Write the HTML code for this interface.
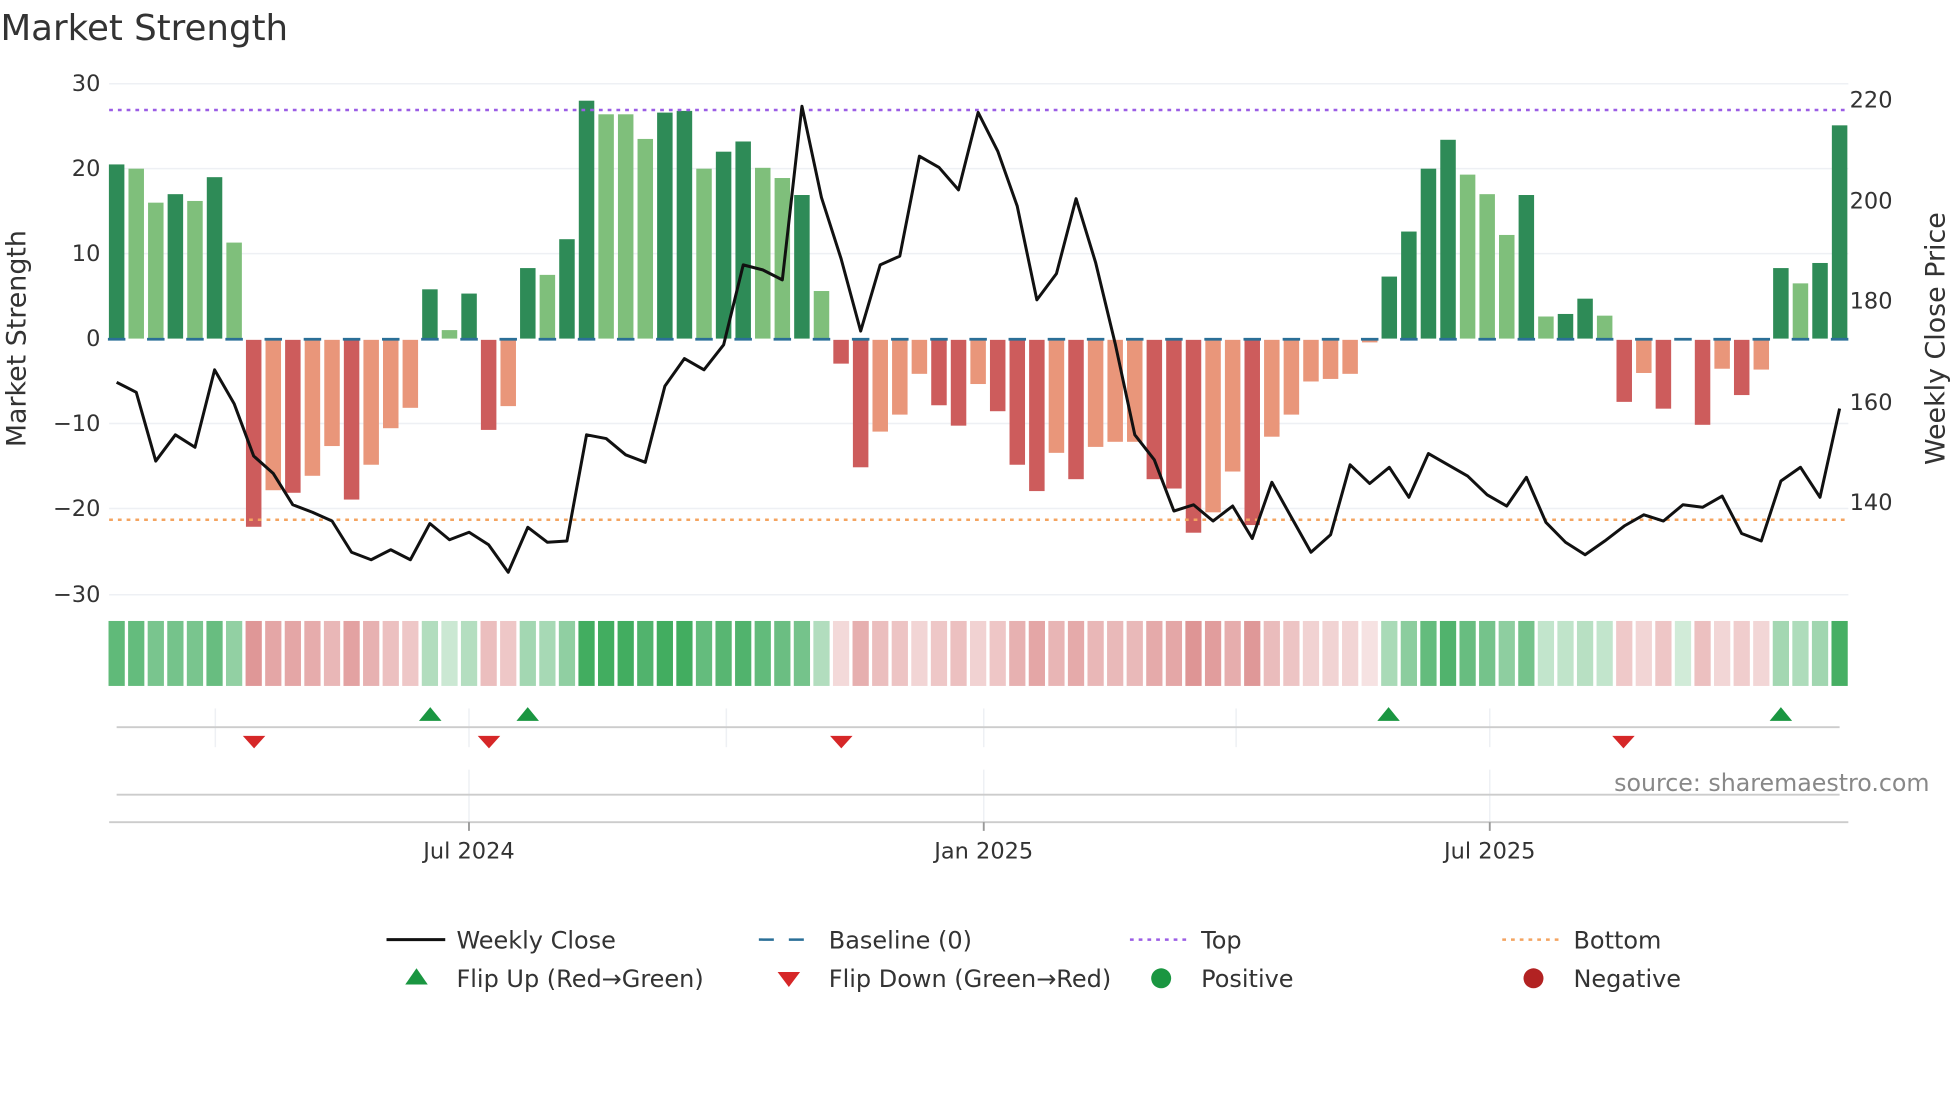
<!DOCTYPE html>
<html><head><meta charset="utf-8"><style>
html,body{margin:0;padding:0;background:#fff;}
svg{display:block;font-family:"DejaVu Sans","Liberation Sans",sans-serif;}
</style></head><body>
<svg id="s" width="1960" height="1102" viewBox="0 0 1568 882" xmlns="http://www.w3.org/2000/svg">
<rect width="1568" height="882" fill="#fff"/>
<text x="0" y="32" font-size="28.5" fill="#333">Market Strength</text>
<g id="grid" stroke="#eef0f4" stroke-width="1.2"></g>
<g id="bars"></g>
<line x1="87" y1="88" x2="1479" y2="88" stroke="#9b5de5" stroke-width="2" stroke-dasharray="3,4"/>
<line x1="87" y1="416" x2="1479" y2="416" stroke="#f4a460" stroke-width="2" stroke-dasharray="3,4"/>
<g id="base"></g>
<polyline id="price" fill="none" stroke="#111" stroke-width="2.4" stroke-linejoin="round"/>
<g id="heat"></g>
<g id="tri"></g>
<g font-size="18" fill="#333">
<text x="80" y="73" text-anchor="end">30</text>
<text x="80" y="141" text-anchor="end">20</text>
<text x="80" y="209" text-anchor="end">10</text>
<text x="80" y="277" text-anchor="end">0</text>
<text x="80" y="345" text-anchor="end">−10</text>
<text x="80" y="413" text-anchor="end">−20</text>
<text x="80" y="482" text-anchor="end">−30</text>
<text x="1480" y="86">220</text>
<text x="1480" y="167">200</text>
<text x="1480" y="247">180</text>
<text x="1480" y="328">160</text>
<text x="1480" y="408">140</text>
<text x="375" y="687" text-anchor="middle">Jul 2024</text>
<text x="787" y="687" text-anchor="middle">Jan 2025</text>
<text x="1192" y="687" text-anchor="middle">Jul 2025</text>
</g>
<text transform="translate(20,271) rotate(-90)" font-size="21.5" fill="#333" text-anchor="middle">Market Strength</text>
<text transform="translate(1556,271) rotate(-90)" font-size="21.5" fill="#333" text-anchor="middle">Weekly Close Price</text>
<text x="1544" y="633" font-size="19" fill="#888" text-anchor="end">source: sharemaestro.com</text>
<g font-size="19.2" fill="#333">
<line x1="309" y1="752" x2="356" y2="752" stroke="#111" stroke-width="2.4"/>
<text x="365" y="759">Weekly Close</text>
<line x1="607" y1="752" x2="652" y2="752" stroke="#2a6f97" stroke-width="2" stroke-dasharray="12,12"/>
<text x="663" y="759">Baseline (0)</text>
<line x1="904" y1="752" x2="949" y2="752" stroke="#9b5de5" stroke-width="2" stroke-dasharray="3,4"/>
<text x="961" y="759">Top</text>
<line x1="1202" y1="752" x2="1247" y2="752" stroke="#f4a460" stroke-width="2" stroke-dasharray="3,4"/>
<text x="1259" y="759">Bottom</text>
<polygon points="324,788 342,788 333,775" fill="#1a9641"/>
<text x="365" y="790">Flip Up (Red→Green)</text>
<polygon points="622,778 640,778 631,790" fill="#d62728"/>
<text x="663" y="790">Flip Down (Green→Red)</text>
<circle cx="929" cy="783" r="8" fill="#1a9641"/>
<text x="961" y="790">Positive</text>
<circle cx="1227" cy="783" r="8" fill="#b22222"/>
<text x="1259" y="790">Negative</text>
</g>
</svg>
<script>
var NS="http://www.w3.org/2000/svg";
function el(p,t,a){var e=document.createElementNS(NS,t);for(var k in a)e.setAttribute(k,a[k]);document.getElementById(p).appendChild(e);return e;}
var v=[20.5,20,16,17,16.2,19,11.3,-22,-17.7,-18,-16,-12.5,-18.8,-14.7,-10.4,-8,5.8,1,5.3,-10.6,-7.8,8.3,7.5,11.7,28,26.4,26.4,23.5,26.6,26.8,20,22,23.2,20.1,18.9,16.9,5.6,-2.8,-15,-10.8,-8.8,-4,-7.7,-10.1,-5.2,-8.4,-14.7,-17.8,-13.3,-16.4,-12.6,-12,-12,-16.4,-17.5,-22.7,-20.3,-15.5,-21.8,-11.4,-8.8,-4.9,-4.6,-4,-0.3,7.3,12.6,20,23.4,19.3,17,12.2,16.9,2.6,2.9,4.7,2.7,-7.3,-3.9,-8.1,0,-10,-3.4,-6.5,-3.5,8.3,6.5,8.9,25.1];
var dk="0 3 5 16 18 21 23 24 28 29 31 32 35 37 38 42 43 45 46 47 49 53 54 55 58 65 66 67 68 72 74 75 77 79 81 83 85 87 88 7 9 12 19".split(" ").map(Number);
var py=[306,314,369,348,358,296,323,365,379,404,410,417,442,448,440,448,419,432,426,436,458,422,434,433,348,351,364,370,309,287,296,276,212,216,224,85,158,207,265,212,205,125,134,152,90,121,165,240,219,159,210,275,348,368,409,404,417,405,431,386,414,442,428,372,387,374,398,363,372,381,396,405,382,418,434,444,433,421,412,417,404,406,397,427,433,385,374,398,327];
var st=1379/88;
[67,135,203,339,407,476].forEach(function(y){el("grid","line",{x1:87,x2:1479,y1:y,y2:y});});
[172,375,581,787,989,1192].forEach(function(x){el("grid","line",{x1:x,x2:x,y1:567,y2:598});});
[375,787,1192].forEach(function(x){el("grid","line",{x1:x,x2:x,y1:616,y2:658});});
el("grid","line",{x1:93,x2:1472,y1:582,y2:582,stroke:"#ccc","stroke-width":1.5});
el("grid","line",{x1:93,x2:1472,y1:636,y2:636,stroke:"#ccc","stroke-width":1.5});
el("grid","line",{x1:87,x2:1479,y1:658,y2:658,stroke:"#ccc","stroke-width":1.5});
[375,787,1192].forEach(function(x){el("grid","line",{x1:x,x2:x,y1:658,y2:665,stroke:"#999","stroke-width":1.5});});
var pts=[];
for(var i=0;i<89;i++){
 var x=93+st*i,val=v[i],d=dk.indexOf(i)>=0,h=Math.abs(val)*6.8;
 var c=val>=0?(d?"#2e8b57":"#7fbf7b"):(d?"#cd5c5c":"#e9967a");
 if(h>0.3)el("bars","rect",{x:x-6.2,width:12.4,y:val>=0?271-h:272,height:h,fill:c});
 var a=0.22+0.68*Math.min(1,Math.abs(val)/26);
 el("heat","rect",{x:x-6.5,width:13,y:497,height:52,fill:val>=0?"#2ea44f":"#cd5c5c","fill-opacity":(val>=0?a:a*0.8).toFixed(2)});
 pts.push(x.toFixed(1)+","+py[i]);
 if(i%2==0)el("base","line",{x1:x-7,x2:x+7,y1:271.5,y2:271.5,stroke:"#2a6f97","stroke-width":2.2});
}
document.getElementById("price").setAttribute("points",pts.join(" "));
[344,422,1111,1425].forEach(function(x){el("tri","polygon",{points:(x-9)+",577 "+(x+9)+",577 "+x+",566",fill:"#1a9641"});});
[203,391,673,1299].forEach(function(x){el("tri","polygon",{points:(x-9)+",589 "+(x+9)+",589 "+x+",599",fill:"#d62728"});});
</script>
</body></html>
